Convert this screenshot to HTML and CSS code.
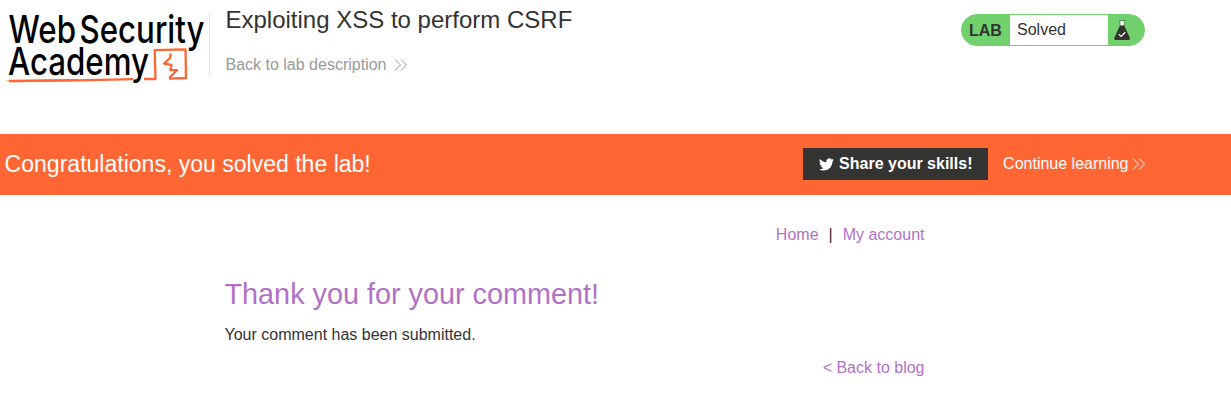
FILE: index.html
```html
<!DOCTYPE html>
<html lang="en">
<head>
<meta charset="utf-8">
<title>Exploiting XSS to perform CSRF</title>
<link rel="stylesheet" href="styles.css">
</head>
<body>
<header class="lab-header">
  <svg class="logo" width="209" height="96" viewBox="0 0 209 96">
    <g class="logo-text">
      <text x="8.5" y="42.6" textLength="67.5" lengthAdjust="spacingAndGlyphs">Web</text>
      <text x="79.5" y="42.6" textLength="125" lengthAdjust="spacingAndGlyphs">Security</text>
      <text x="8" y="75" textLength="141" lengthAdjust="spacingAndGlyphs">Academy</text>
    </g>
    <g fill="none" stroke="#ff6633" stroke-width="2.3" stroke-linejoin="round">
      <path d="M9 81 L78 80.3 L133 79.2 M144 79 L155.5 79 L154.7 50.2 L185.5 49.3 L186 78 L169 78.6"/>
      <path d="M170.6 53.5 L170 58 L164 63.5 L171.5 65 L170.3 70 L177 70.2 L169.3 77.8"/>
    </g>
    <path d="M5.5 80.5 L14 80 L78 79 L78 81 L14 82.2Z" fill="#ff6633"/>
  </svg>
  <div class="title-block">
    <h1 class="lab-title">Exploiting XSS to perform CSRF</h1>
    <a class="back-link">Back to lab description
      <svg class="chevrons" width="14" height="12" viewBox="0 0 14 12"><path d="M1 .5 L6.5 6 L1 11.5 M7 .5 L12.5 6 L7 11.5"/></svg>
    </a>
  </div>
  <div class="lab-status">
    <span class="status-tag">LAB</span>
    <span class="status-text">Solved</span>
    <svg class="flask" width="36" height="30" viewBox="0 0 36 30">
      <path d="M10.8 5.5 H17.4 M12 6 V11 M16.2 6 V11" fill="none" stroke="#5c8f59" stroke-width="1"/>
      <path d="M12.5 6 H15.7 V10.5 H12.5Z" fill="#fff"/>
      <path d="M12 10.5 H16.2 L21.6 22.2 Q22.4 25 20.4 25 H7.8 Q5.8 25 6.6 22.2Z" fill="#333332"/>
      <path d="M10.7 19.2 L13 21.5 L17.3 17.3" fill="none" stroke="#fff" stroke-width="1.2"/>
    </svg>
  </div>
</header>
<section class="banner">
  <h2 class="banner-title">Congratulations, you solved the lab!</h2>
  <a class="share">
    <svg width="15" height="15" viewBox="0 0 24 24" fill="#fff"><path d="M23.95 4.57a10 10 0 0 1-2.82.77 4.96 4.96 0 0 0 2.16-2.72c-.95.55-2 .96-3.13 1.18a4.92 4.92 0 0 0-8.38 4.48C7.69 8.09 4.07 6.13 1.64 3.16a4.92 4.92 0 0 0 1.52 6.57 4.9 4.9 0 0 1-2.23-.61v.06a4.92 4.92 0 0 0 3.95 4.83 5 5 0 0 1-2.21.08 4.94 4.94 0 0 0 4.6 3.42A9.87 9.87 0 0 1 0 19.54a14 14 0 0 0 7.55 2.21c9.05 0 14-7.5 14-13.98 0-.21 0-.42-.02-.63a9.94 9.94 0 0 0 2.46-2.55z"/></svg>
    <span>Share your skills!</span>
  </a>
  <a class="continue">Continue learning
    <svg class="chevrons" width="14" height="12" viewBox="0 0 14 12"><path d="M1 .5 L6.5 6 L1 11.5 M7 .5 L12.5 6 L7 11.5"/></svg>
  </a>
</section>
<main class="content">
  <nav class="nav"><a>Home</a><span class="divider">|</span><a>My account</a></nav>
  <h1 class="message-title">Thank you for your comment!</h1>
  <p class="message">Your comment has been submitted.</p>
  <a class="blog-link">&lt; Back to blog</a>
</main>
</body>
</html>
```
FILE: styles.css
```css
* { box-sizing: border-box; }
body, h1, h2, p { margin: 0; font-weight: 400; }
body {
  background: #fff;
  color: #333332;
  font: 16px/20px "Liberation Sans", Arial, sans-serif;
  overflow: hidden;
}
.lab-header { display: flex; align-items: flex-start; height: 134px; padding-right: 86px; }
.logo { flex: none; overflow: visible; }
.logo-text { font: 550 37.5px Inter, sans-serif; fill: #000; }
.title-block { height: 62px; margin-top: 14px; padding-left: 15.5px; border-left: 1px solid #e2e2e2; }
.lab-title { margin-top: -8px; font-size: 24px; line-height: 28px; }
.back-link { display: flex; align-items: center; gap: 8px; margin-top: 21px; color: #999; }
.back-link .chevrons { margin-top: -1px; }
.chevrons { flex: none; fill: none; stroke: currentColor; stroke-width: 1; }
.lab-status {
  display: flex;
  width: 184px;
  height: 32px;
  margin: 14px 0 0 auto;
  border: 1px solid #70d16d;
  border-radius: 16px;
  background: #70d16d;
  line-height: 30px;
  overflow: hidden;
}
.status-tag { width: 48px; padding-left: 7px; font-weight: 700; line-height: 32px; }
.status-text { width: 98px; padding-left: 7px; background: #fff; }
.banner {
  display: flex;
  align-items: center;
  height: 61px;
  padding: 0 85px 1px 4.6px;
  background: #ff6633;
  color: #fff;
}
.banner-title { margin-right: auto; font-size: 23.04px; line-height: 28px; }
.share {
  display: flex;
  align-items: center;
  gap: 5px;
  width: 185px;
  height: 32px;
  margin-right: 15px;
  padding-left: 16px;
  background: #333332;
  font-weight: 700;
}
.continue { display: flex; align-items: center; gap: 3.5px; }
.content { display: flex; flex-direction: column; width: 700px; margin-left: 224.5px; }
.nav { align-self: flex-end; display: flex; margin-top: 30px; color: #b172c6; }
.divider { margin: 0 10px; color: #333332; }
.message-title { margin-top: 32px; color: #b172c6; font-size: 28.8px; line-height: 34px; }
.message { margin-top: 14px; }
.blog-link { align-self: flex-end; margin-top: 13px; color: #b172c6; }
```
